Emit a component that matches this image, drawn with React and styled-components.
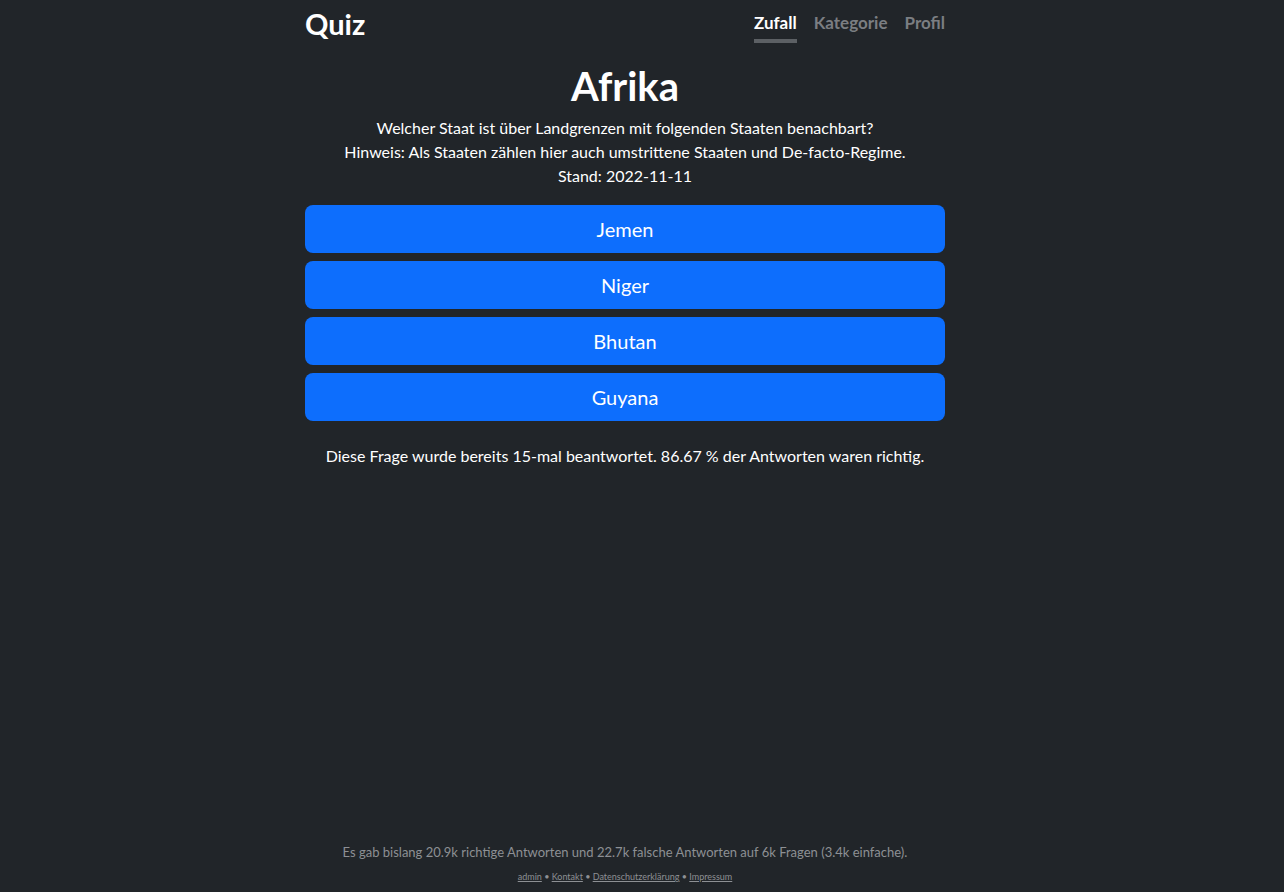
import React from "react";
import styled, { createGlobalStyle } from "styled-components";

const Global = createGlobalStyle`
  html, body { margin: 0; padding: 0; background: #212529; }
  body {
    font-family: Lato, "Noto Sans", sans-serif;
    color: #fff;
    font-size: 16px;
    line-height: 1.5;
  }
  * { box-sizing: border-box; }
`;

const Page = styled.div`
  min-height: 100vh;
  display: flex;
  flex-direction: column;
  align-items: center;
  padding-right: 34px;
`;

const Container = styled.div`
  width: 640px;
  display: flex;
  flex-direction: column;
`;

const Header = styled.header`
  display: flex;
  justify-content: space-between;
  align-items: flex-start;
  height: 60px;
  padding-top: 6px;
`;

const Brand = styled.div`
  font-size: 29px;
  font-weight: 700;
  line-height: 36px;
`;

const Nav = styled.nav`
  display: flex;
  gap: 17px;
  padding-top: 5px;
`;

const NavLink = styled.a`
  font-size: 17px;
  font-weight: 700;
  line-height: 24px;
  color: ${(p) => (p.$active ? "#ffffff" : "#7b7e82")};
  text-decoration: none;
  padding-bottom: 4px;
  border-bottom: 4px solid ${(p) => (p.$active ? "#5c6064" : "transparent")};
`;

const Title = styled.h1`
  margin: 2px 0 6px;
  text-align: center;
  font-size: 40px;
  font-weight: 700;
  line-height: 48px;
`;

const Para = styled.p`
  margin: 0;
  text-align: center;
  font-size: 16px;
  line-height: 24px;
`;

const Answers = styled.div`
  margin-top: 17px;
  display: flex;
  flex-direction: column;
  gap: 8px;
`;

const AnswerButton = styled.button`
  height: 48px;
  border: none;
  border-radius: 8px;
  background: #0d6efd;
  color: #fff;
  font-family: inherit;
  font-size: 20px;
  cursor: pointer;
`;

const Stats = styled.p`
  margin: 23px 0 0;
  text-align: center;
  font-size: 16px;
  line-height: 24px;
`;

const Spacer = styled.div`
  flex: 1;
`;

const Footer = styled.footer`
  width: 640px;
  text-align: center;
  padding-bottom: 8px;
`;

const FooterStats = styled.div`
  font-size: 13px;
  line-height: 20px;
  color: #8d9094;
  margin-bottom: 8px;
`;

const FooterLinks = styled.div`
  font-size: 9px;
  line-height: 14px;
  color: #8d9094;
`;

const FooterLink = styled.a`
  color: #8d9094;
  text-decoration: underline;
`;

const answers = ["Jemen", "Niger", "Bhutan", "Guyana"];
const links = ["admin", "Kontakt", "Datenschutzerklärung", "Impressum"];

export default function App() {
  return (
    <>
      <Global />
      <Page>
        <Container>
          <Header>
            <Brand>Quiz</Brand>
            <Nav>
              <NavLink $active href="#">Zufall</NavLink>
              <NavLink href="#">Kategorie</NavLink>
              <NavLink href="#">Profil</NavLink>
            </Nav>
          </Header>
          <Title>Afrika</Title>
          <Para>Welcher Staat ist über Landgrenzen mit folgenden Staaten benachbart?</Para>
          <Para>Hinweis: Als Staaten zählen hier auch umstrittene Staaten und De-facto-Regime.</Para>
          <Para>Stand: 2022-11-11</Para>
          <Answers>
            {answers.map((a) => (
              <AnswerButton key={a}>{a}</AnswerButton>
            ))}
          </Answers>
          <Stats>Diese Frage wurde bereits 15-mal beantwortet. 86.67 % der Antworten waren richtig.</Stats>
        </Container>
        <Spacer />
        <Footer>
          <FooterStats>
            Es gab bislang 20.9k richtige Antworten und 22.7k falsche Antworten auf 6k Fragen (3.4k einfache).
          </FooterStats>
          <FooterLinks>
            {links.map((l, i) => (
              <React.Fragment key={l}>
                {i > 0 && " • "}
                <FooterLink href="#">{l}</FooterLink>
              </React.Fragment>
            ))}
          </FooterLinks>
        </Footer>
      </Page>
    </>
  );
}
